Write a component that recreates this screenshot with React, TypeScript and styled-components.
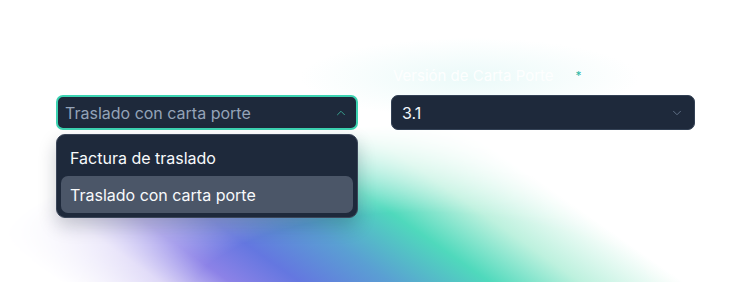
import React from 'react';
import styled, { createGlobalStyle } from 'styled-components';
import { ChevronDown, ChevronUp } from 'lucide-react';

const GlobalStyle = createGlobalStyle`
  html, body {
    margin: 0;
    padding: 0;
    background: #ffffff;
  }
  * {
    box-sizing: border-box;
  }
`;

const Stage = styled.div`
  position: relative;
  width: 750px;
  height: 282px;
  overflow: hidden;
  border-radius: 0 0 18px 18px;
  font-family: Inter, 'Noto Sans', sans-serif;
  background:
    radial-gradient(170px 40px at 470px 78px, rgba(205, 242, 240, 0.4), rgba(205, 242, 240, 0)),
    #ffffff;
  padding: 66px 55px 0 56px;

  /* soft colour glow behind the form */
  &::before {
    content: '';
    position: absolute;
    inset: 0;
    background: linear-gradient(
      35deg,
      #ffffff 34px,
      #d9d2f6 92px,
      #8c82e7 132px,
      #6477e0 172px,
      #5a9fd3 224px,
      #4fd9bc 281px,
      #bdf1de 333px,
      #ffffff 392px
    );
    -webkit-mask-image: radial-gradient(460px 175px at 420px 300px, #000 0%, #000 50%, transparent 100%);
    mask-image: radial-gradient(460px 175px at 420px 300px, #000 0%, #000 50%, transparent 100%);
  }
`;

const Fields = styled.div`
  position: relative;
  z-index: 1;
  display: grid;
  grid-template-columns: 302px 304px;
  column-gap: 33px;
`;

const Field = styled.div`
  position: relative;
  display: flex;
  flex-direction: column;
`;

const Label = styled.label<{ $inset?: number }>`
  display: flex;
  align-items: center;
  height: 18px;
  margin-bottom: 11px;
  padding-left: ${({ $inset = 2 }) => $inset}px;
  font-size: 15px;
  color: rgba(255, 255, 255, 0.94);
`;

const Required = styled.span`
  margin-left: 22px;
  color: #2fb9a6;
  font-size: 12px;
`;

const Select = styled.div<{ $open?: boolean }>`
  display: flex;
  align-items: center;
  justify-content: space-between;
  height: 35px;
  padding: 0 ${({ $open }) => ($open ? '8px 0 7px' : '10px 0 10px')};
  background: #1e293b;
  border: ${({ $open }) => ($open ? '2px solid #3cd3b2' : '1px solid #334155')};
  border-radius: 7px;
  font-size: 16px;
  color: ${({ $open }) => ($open ? '#94a3b8' : '#f1f5f9')};
`;

const Chevron = styled.span<{ $open?: boolean }>`
  display: flex;
  color: ${({ $open }) => ($open ? '#3aa995' : '#64748b')};
`;

const Menu = styled.ul`
  position: absolute;
  top: 68px;
  left: 0;
  right: 0;
  margin: 0;
  padding: 4px;
  list-style: none;
  background: #1e293b;
  border: 1px solid #3b4659;
  border-radius: 9px;
  box-shadow: 0 8px 18px rgba(15, 23, 42, 0.22);
`;

const Option = styled.li<{ $active?: boolean }>`
  display: flex;
  align-items: center;
  height: 37px;
  padding: 0 9px;
  border-radius: 7px;
  font-size: 16px;
  color: #f8fafc;
  background: ${({ $active }) => ($active ? '#4b5668' : 'transparent')};
`;

const App: React.FC = () => (
  <>
    <GlobalStyle />
    <Stage>
      <Fields>
        <Field>
          <Label $inset={9}>Tipo de factura de traslado</Label>
          <Select $open>
            Traslado con carta porte
            <Chevron $open>
              <ChevronUp size={14} strokeWidth={1.6} />
            </Chevron>
          </Select>
          <Menu>
            <Option>Factura de traslado</Option>
            <Option $active>Traslado con carta porte</Option>
          </Menu>
        </Field>
        <Field>
          <Label>
            Versión de Carta Porte
            <Required>*</Required>
          </Label>
          <Select>
            3.1
            <Chevron>
              <ChevronDown size={14} strokeWidth={1.6} />
            </Chevron>
          </Select>
        </Field>
      </Fields>
    </Stage>
  </>
);

export default App;
